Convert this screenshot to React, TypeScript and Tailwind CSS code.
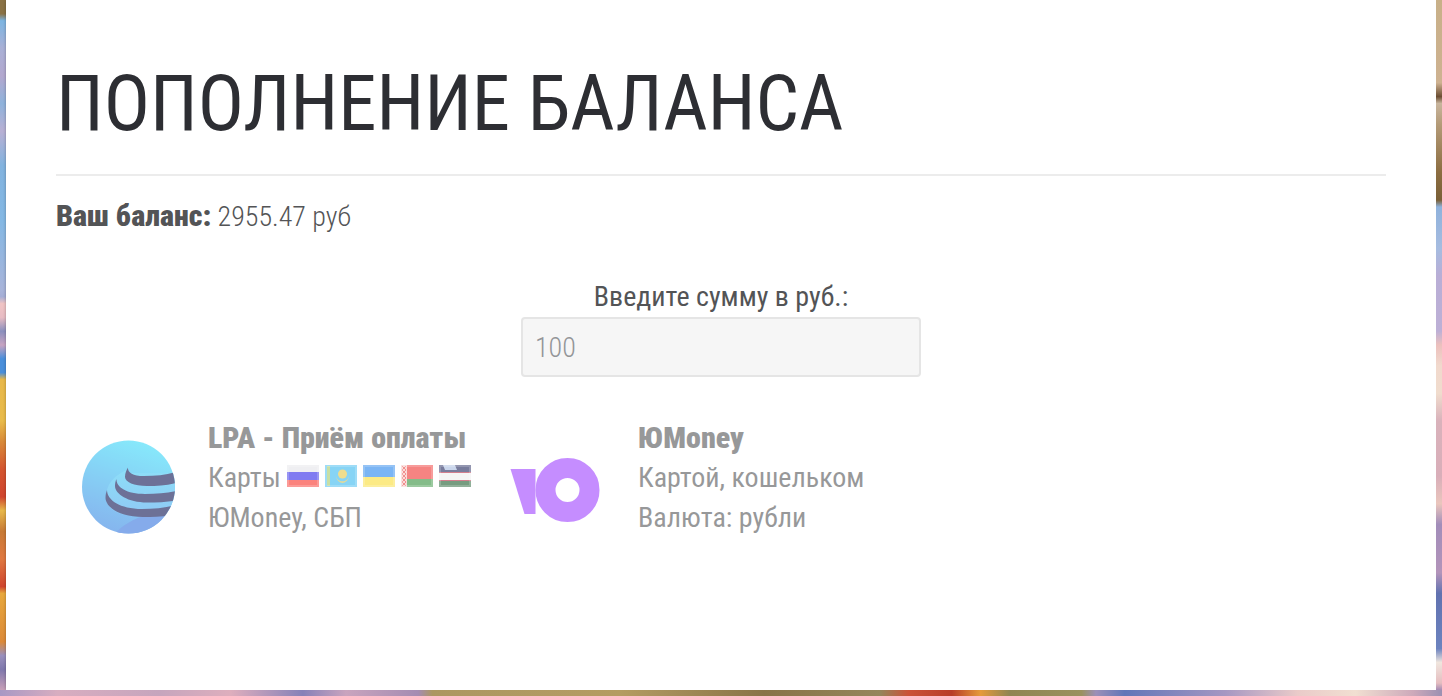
import type { ReactNode } from 'react'

interface PaymentMethodProps {
  logo: ReactNode
  title: string
  children: ReactNode
}

function PaymentMethod({ logo, title, children }: PaymentMethodProps) {
  return (
    <button type="button" className="flex w-[430px] items-start gap-[30px] text-left opacity-60">
      <span className="mt-5 shrink-0">{logo}</span>
      <span className="block whitespace-nowrap">
        <span className="block text-[30px] leading-10 font-black">{title}</span>
        {children}
      </span>
    </button>
  )
}

function LpaLogo() {
  return (
    <svg viewBox="0 0 100 100" className="size-[100px]" aria-hidden="true">
      <defs>
        <linearGradient id="lpaFill" x1="0.7" y1="0" x2="0.35" y2="1">
          <stop offset="0" stopColor="#38e0fb" />
          <stop offset="1" stopColor="#357fe2" />
        </linearGradient>
        <linearGradient id="lpaBand" x1="0" y1="0" x2="0" y2="1">
          <stop offset="0" stopColor="#43c9f4" />
          <stop offset="1" stopColor="#45a5ee" />
        </linearGradient>
        <clipPath id="lpaClip">
          <circle cx="50.5" cy="49" r="46.5" />
        </clipPath>
      </defs>
      <g clipPath="url(#lpaClip)">
        <rect width="100" height="100" fill="url(#lpaFill)" />
        <path d="M35 97C45 87 55 81 68 77H100V100H35Z" fill="#3575de" />
        <path d="M49 32C39 36 28 45 28 59C28 71 40 78 60 78L100 73V35H49Z" fill="url(#lpaBand)" />
        <g fill="#0d1453">
          <path d="M50 29.5C49.5 34 54 38 66 38C78 38 88 37 98 34V45C88 47.5 79 48 69 48C56 48 47 44 47 39C47 35 48.5 32 50 29.5Z" />
          <path d="M38.5 41C38 49 48 56 67 56C79 56 89 55 98 53V62.5C89 64 79 64.5 69 64.5C50 64.5 37 56 37 48C37 45 37.5 43 38.5 41Z" />
          <path d="M29 52C29 62 42 71 64 71C76 71 86 70 98 67V77C86 78.5 76 79 65 79C43 79 28 70 27.5 60C27.5 57 28 54.5 29 52Z" />
        </g>
      </g>
    </svg>
  )
}

function YooMoneyLogo() {
  return (
    <svg viewBox="0 0 100 100" className="size-[100px]" aria-hidden="true">
      <path d="M2.5 31H27.5V76H16.5Z" fill="#a042ff" />
      <circle cx="59.5" cy="52" r="22" fill="none" stroke="#a042ff" strokeWidth="20" />
    </svg>
  )
}

function Flag({ label, children }: { label: string; children: ReactNode }) {
  return (
    <svg viewBox="0 0 32 22" className="h-[22px] w-8" role="img" aria-label={label}>
      {children}
      <rect x="1" y="1" width="30" height="20" fill="none" stroke="#fff" strokeOpacity="0.2" strokeWidth="2" />
    </svg>
  )
}

function Flags() {
  return (
    <span className="flex gap-[6px] pb-1">
      <Flag label="Россия">
        <rect width="32" height="22" fill="#e6e6ea" />
        <rect y="7" width="32" height="8" fill="#2d25e8" />
        <rect y="15" width="32" height="7" fill="#fa3128" />
      </Flag>
      <Flag label="Казахстан">
        <rect width="32" height="22" fill="#38b8f0" />
        <rect x="2" y="1" width="3" height="20" fill="#a5ca68" />
        <circle cx="17.5" cy="9" r="4.5" fill="#e6c842" />
        <path d="M11 11C12 18 23 18 24 11C24 15 20 18 17.5 18C15 18 11 15 11 11Z" fill="#d6c452" />
      </Flag>
      <Flag label="Украина">
        <rect width="32" height="12" fill="#2484ed" />
        <rect y="12" width="32" height="10" fill="#fbdd35" />
      </Flag>
      <Flag label="Беларусь">
        <rect width="32" height="14" fill="#ef3330" />
        <rect y="14" width="32" height="8" fill="#33913b" />
        <rect width="6" height="22" fill="#f7c4c1" />
        <path d="M1 1L5 5L1 9L5 13L1 17L5 21M5 1L1 5L5 9L1 13L5 17L1 21" stroke="#e94643" strokeWidth="1" fill="none" />
      </Flag>
      <Flag label="Узбекистан">
        <rect width="32" height="22" fill="#eeeeee" />
        <rect width="32" height="7" fill="#20265c" />
        <path d="M4 0H16L18 5H6Z" fill="#a8bce0" />
        <rect y="7" width="32" height="1" fill="#b52943" />
        <rect y="15" width="32" height="1" fill="#b52943" />
        <rect y="16" width="32" height="6" fill="#1c5c2c" />
      </Flag>
    </span>
  )
}

export default function App() {
  return (
    <div className="flex min-h-screen flex-col bg-[#b6a4c4] font-['Roboto_Condensed','Roboto',sans-serif] text-[28px] leading-10 text-[#535456]">
      <div className="flex flex-1">
        <div className="w-[6px] bg-[linear-gradient(#8a7245_0%,#8a7245_2%,#7db5e2_3%,#a9b0d6_7%,#b3a8cf_11%,#8fb3dc_15%,#b8b0d4_19%,#82b3df_24%,#84b8e4_32%,#a8b4da_42%,#a5aed6_43%,#f0c4c4_44%,#e8bcc4_46%,#8b90be_48%,#c8a4c2_50%,#4a8fdb_52%,#4a8fdb_54%,#e8b84a_55%,#e9bb4a_61%,#d98a38_64%,#d4552f_68%,#d0452e_72%,#e8b84a_74%,#c87a35_77%,#e07840_81%,#d0452e_85%,#e8a83c_86%,#dc8a38_93%,#9a90bd_95%,#7f78ad_97%,#c8a0b8_100%)]" />
        <main className="flex-1 bg-white px-[50px] pt-[54px] pb-[150px] shadow-[0_0_3px_rgba(0,0,0,0.3)]">
          <h1 className="text-[77px] leading-[100px] font-normal text-[#2d2e33] uppercase">Пополнение баланса</h1>
          <hr className="my-5 border-t-2 border-[#ececec]" />
          <p className="font-light">
            <strong className="text-[30px] leading-10 font-black">Ваш баланс:</strong> 2955.47 руб
          </p>
          <form className="mx-auto mt-10 flex w-[400px] max-w-full flex-col">
            <label htmlFor="amount" className="text-center">
              Введите сумму в руб.:
            </label>
            <input
              id="amount"
              type="text"
              inputMode="numeric"
              placeholder="100"
              className="h-[60px] rounded-[4px] border-2 border-[#e5e5e5] bg-[#f6f6f6] px-3 font-light placeholder:text-[#939598]"
            />
          </form>
          <div className="mt-[41px] flex flex-wrap pl-[22px]">
            <PaymentMethod logo={<LpaLogo />} title="LPA - Приём оплаты">
              <span className="flex items-center gap-[6px]">
                Карты <Flags />
              </span>
              <span className="block">ЮMoney, СБП</span>
            </PaymentMethod>
            <PaymentMethod logo={<YooMoneyLogo />} title="ЮMoney">
              <span className="block">Картой, кошельком</span>
              <span className="block">Валюта: рубли</span>
            </PaymentMethod>
          </div>
        </main>
        <div className="w-[6px] bg-[linear-gradient(#c8b088_0%,#ceb291_12%,#6b4d32_14%,#c8b59d_15%,#b49b78_18%,#8c6d41_25%,#7a6037_29%,#8fb2dc_30%,#a6bce0_36%,#b9aed6_40%,#bdb0d6_48%,#ecc0bd_50%,#f1d9cd_53%,#f0dccd_57%,#d9b2bb_61%,#d9aeb9_69%,#eac6bd_73%,#a28dba_76%,#b394ba_83%,#6172b0_86%,#6c83bf_94%,#f0e6de_96%,#e5bdc0_99%,#a48bb4_100%)]" />
      </div>
      <div className="h-[6px] bg-[linear-gradient(90deg,#a898c4_0%,#d8adc0_4%,#c6a5bd_11%,#deaebd_16%,#8681b8_21%,#c9a4be_24%,#a48cb2_29%,#ac9761_30%,#b49c62_43%,#887347_53%,#94865c_61%,#cb5238_63%,#b83d29_66%,#e59a3a_68%,#8f8552_70%,#9a915f_75%,#9b8fb8_76%,#6276b8_78%,#a697c2_85%,#eacbc9_90%,#f1dfd1_94%,#cda9ba_98%,#9c90b2_100%)]" />
    </div>
  )
}
